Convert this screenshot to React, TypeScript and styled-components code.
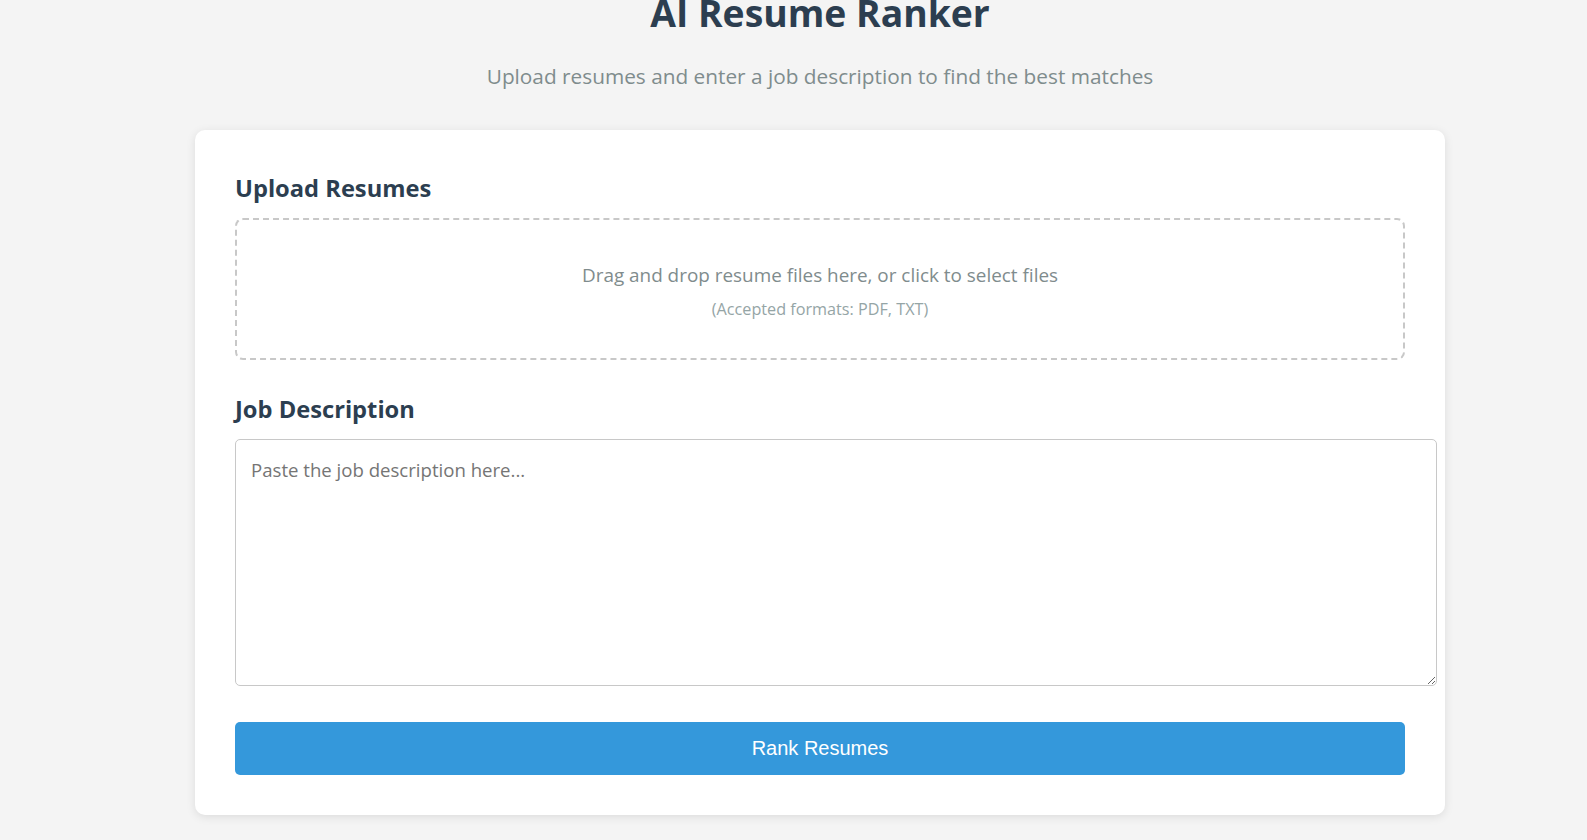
import React from "react";
import styled, { createGlobalStyle } from "styled-components";

const GlobalStyle = createGlobalStyle`
  html, body {
    margin: 0;
    padding: 0;
    background: #f4f4f4;
  }
  body {
    font-family: "Open Sans", "Noto Sans", sans-serif;
    color: #2c3e50;
  }
`;

const Page = styled.div`
  padding: 0 142px 40px 195px;
  overflow: hidden;
`;

const Header = styled.header`
  display: flex;
  flex-direction: column;
  align-items: center;
  margin-bottom: 39px;
`;

const Title = styled.h1`
  margin: -9px 0 0;
  font-size: 37.3px;
  font-weight: 700;
  line-height: 1.2;
  color: #2c3e50;
`;

const Subtitle = styled.p`
  margin: 26px 0 0;
  font-size: 20.8px;
  line-height: 1.4;
  color: #7f8c8d;
`;

const Card = styled.main`
  background: #ffffff;
  border-radius: 10px;
  box-shadow: 0 2px 10px rgba(0, 0, 0, 0.1);
  padding: 40px;
  display: flex;
  flex-direction: column;
`;

const Section = styled.section`
  margin-bottom: 31px;
`;

const SectionTitle = styled.h2`
  margin: 0 0 12px;
  font-size: 23.7px;
  font-weight: 700;
  line-height: 36px;
  color: #2c3e50;
`;

const DropZone = styled.div`
  border: 2px dashed #c8c8c8;
  border-radius: 8px;
  padding: 41px 40px 38px;
  text-align: center;
  cursor: pointer;
`;

const DropText = styled.p`
  margin: 0 0 9px;
  font-size: 18.9px;
  line-height: 28px;
  color: #7f8c8d;
`;

const DropHint = styled.p`
  margin: 0;
  font-size: 16.2px;
  line-height: 22px;
  color: #95a5a6;
`;

const TextArea = styled.textarea`
  display: block;
  width: 100%;
  height: 215px;
  padding: 17px 15px 13px;
  border: 1px solid #c8c8c8;
  border-radius: 5px;
  font-family: "Open Sans", "Noto Sans", sans-serif;
  font-size: 18.6px;
  color: #2c3e50;
  background: #fff;
  outline: none;
  &::placeholder {
    color: #757575;
  }
`;

const RankButton = styled.button`
  margin-top: 5px;
  width: 100%;
  padding: 15px;
  border: none;
  border-radius: 5px;
  background: #3498db;
  color: #ffffff;
  font-family: "Liberation Sans", Arial, sans-serif;
  font-size: 20px;
  line-height: 23px;
  cursor: pointer;
`;

export default function App() {
  return (
    <>
      <GlobalStyle />
      <Page>
        <Header>
          <Title>AI Resume Ranker</Title>
          <Subtitle>Upload resumes and enter a job description to find the best matches</Subtitle>
        </Header>
        <Card>
          <Section>
            <SectionTitle>Upload Resumes</SectionTitle>
            <DropZone>
              <DropText>Drag and drop resume files here, or click to select files</DropText>
              <DropHint>(Accepted formats: PDF, TXT)</DropHint>
            </DropZone>
          </Section>
          <Section>
            <SectionTitle>Job Description</SectionTitle>
            <TextArea placeholder="Paste the job description here..." />
          </Section>
          <RankButton type="button">Rank Resumes</RankButton>
        </Card>
      </Page>
    </>
  );
}
